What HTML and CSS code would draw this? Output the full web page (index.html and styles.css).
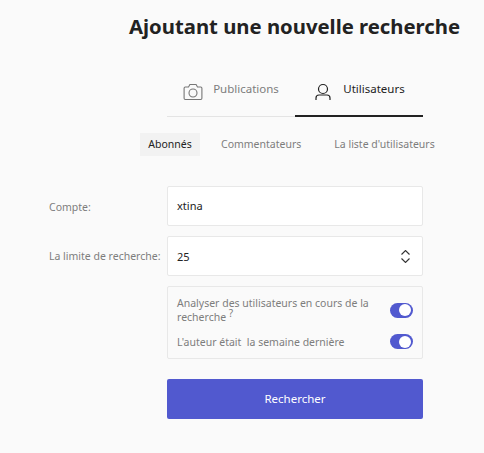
FILE: index.html
```html
<!DOCTYPE html>
<html lang="fr">
<head>
    <meta charset="UTF-8">
    <title>Ajoutant une nouvelle recherche</title>
    <meta name="viewport" content="width=device-width, initial-scale=1.0">
    <link rel="stylesheet" href="styles.css">
</head>
<body>
    <div class="container">
        <h1>Ajoutant une nouvelle recherche</h1>

        <div class="tabs">
            <a class="tab">
                <svg class="tab-icon" width="20" height="20" viewBox="0 0 20 20" fill="none" stroke="#777" stroke-width="1.100">
                    <path d="M2.300 5h3.200l1.400-2.500h6.200L14.500 5h3.200a1.200 1.200 0 0 1 1.200 1.200v10.100a1.200 1.200 0 0 1-1.200 1.200H2.300a1.200 1.200 0 0 1-1.200-1.200V6.200A1.200 1.200 0 0 1 2.300 5z"/>
                    <circle cx="10" cy="11" r="4"/>
                </svg>
                <span>Publications</span>
            </a>
            <a class="tab active">
                <svg class="tab-icon" width="20" height="20" viewBox="0 0 20 20" fill="none" stroke="#222" stroke-width="1.200">
                    <circle cx="10" cy="7" r="4.500"/>
                    <path d="M3 18v-2a3 3 0 0 1 3-3h8a3 3 0 0 1 3 3v2"/>
                </svg>
                <span>Utilisateurs</span>
            </a>
        </div>

        <div class="subtabs">
            <a class="subtab active">Abonnés</a>
            <a class="subtab">Commentateurs</a>
            <a class="subtab">La liste d'utilisateurs</a>
        </div>

        <div class="form-row">
            <label class="form-label account-label">Compte:</label>
            <div class="field account-field">xtina</div>
        </div>
        <div class="form-row">
            <label class="form-label">La limite de recherche:</label>
            <div class="field">
                <span>25</span>
                <svg width="9" height="13" viewBox="0 0 9 13" fill="none" stroke="#333" stroke-width="1.100">
                    <path d="M.5 4.500l4-4 4 4"/>
                    <path d="M.5 8.500l4 4 4-4"/>
                </svg>
            </div>
        </div>

        <div class="form-row">
            <div class="form-label"></div>
            <div class="options">
                <div class="option">
                    <span class="option-text">Analyser des utilisateurs en cours de la recherche <sup>?</sup></span>
                    <span class="toggle"></span>
                </div>
                <div class="option">
                    <span class="option-text">L'auteur était&nbsp; la semaine dernière</span>
                    <span class="toggle"></span>
                </div>
            </div>
        </div>

        <div class="form-row">
            <div class="form-label"></div>
            <button class="search-btn">Rechercher</button>
        </div>
    </div>
</body>
</html>
```

FILE: styles.css
```css
:root {
    --accent: #5159cf;
    --border: #e8e8e8;
    --muted: #7d7d7d;
}

body {
    background: #fafafa;
    color: #222;
    font-family: "Noto Sans", sans-serif;
    font-size: 10.5px;
    margin: 0;
}

.container {
    width: 484px;
    height: 453px;
    overflow: hidden;
}

h1 {
    font-size: 20.3px;
    line-height: 28px;
    font-weight: 700;
    color: #222;
    margin: 12px 0 0 129px;
    white-space: nowrap;
}

.tabs {
    display: flex;
    margin: 30px 0 0 167px;
    width: 256px;
}

.tab {
    flex: 1;
    height: 47px;
    box-sizing: border-box;
    display: flex;
    justify-content: center;
    gap: 10px;
    padding-top: 11px;
    color: var(--muted);
    border-bottom: 1px solid #e4e4e4;
    font-size: 11.5px;
    line-height: 15px;
}

.tab-icon {
    margin-top: 1px;
}

.tab.active {
    color: #222;
    border-bottom: 2px solid #222;
}

.subtabs {
    display: flex;
    margin: 16px 0 30px 140px;
    height: 23px;
    align-items: center;
}

.subtab {
    color: var(--muted);
    line-height: 23px;
    margin-right: 33px;
    white-space: nowrap;
}

.subtab.active {
    background: #f2f2f2;
    color: #222;
    width: 60px;
    text-align: center;
    margin-right: 21px;
}

.form-row {
    display: flex;
    align-items: center;
    margin-bottom: 10px;
    padding-left: 49px;
}

.form-label {
    width: 118px;
    flex: none;
    color: var(--muted);
    white-space: nowrap;
}

.account-label {
    padding-top: 2px;
}

.field {
    width: 256px;
    height: 40px;
    box-sizing: border-box;
    background: white;
    border: 1px solid var(--border);
    border-radius: 2px;
    padding: 0 12px 0 9px;
    display: flex;
    align-items: center;
    justify-content: space-between;
    font-size: 11px;
}

.account-field {
    padding-bottom: 2px;
}

.options {
    width: 256px;
    height: 73px;
    box-sizing: border-box;
    border: 1px solid var(--border);
    border-radius: 2px;
    padding: 9px 9px 0 9px;
    color: var(--muted);
    line-height: 14px;
}

.option {
    display: flex;
    align-items: center;
    justify-content: space-between;
    margin-bottom: 10px;
}

.option:last-child {
    margin-bottom: 0;
}

.option-text {
    width: 200px;
}

.option sup {
    font-size: 10px;
    line-height: 0;
}

.toggle {
    flex: none;
    position: relative;
    width: 23px;
    height: 15px;
    border-radius: 8px;
    background: var(--accent);
}

.toggle::after {
    content: "";
    position: absolute;
    top: 1.5px;
    right: 2px;
    width: 12px;
    height: 12px;
    border-radius: 50%;
    background: white;
}

.search-btn {
    width: 256px;
    height: 40px;
    margin-top: 10px;
    padding: 0 0 2px;
    background: var(--accent);
    border: none;
    border-radius: 2px;
    color: white;
    font-family: inherit;
    font-size: 11.5px;
}
```
